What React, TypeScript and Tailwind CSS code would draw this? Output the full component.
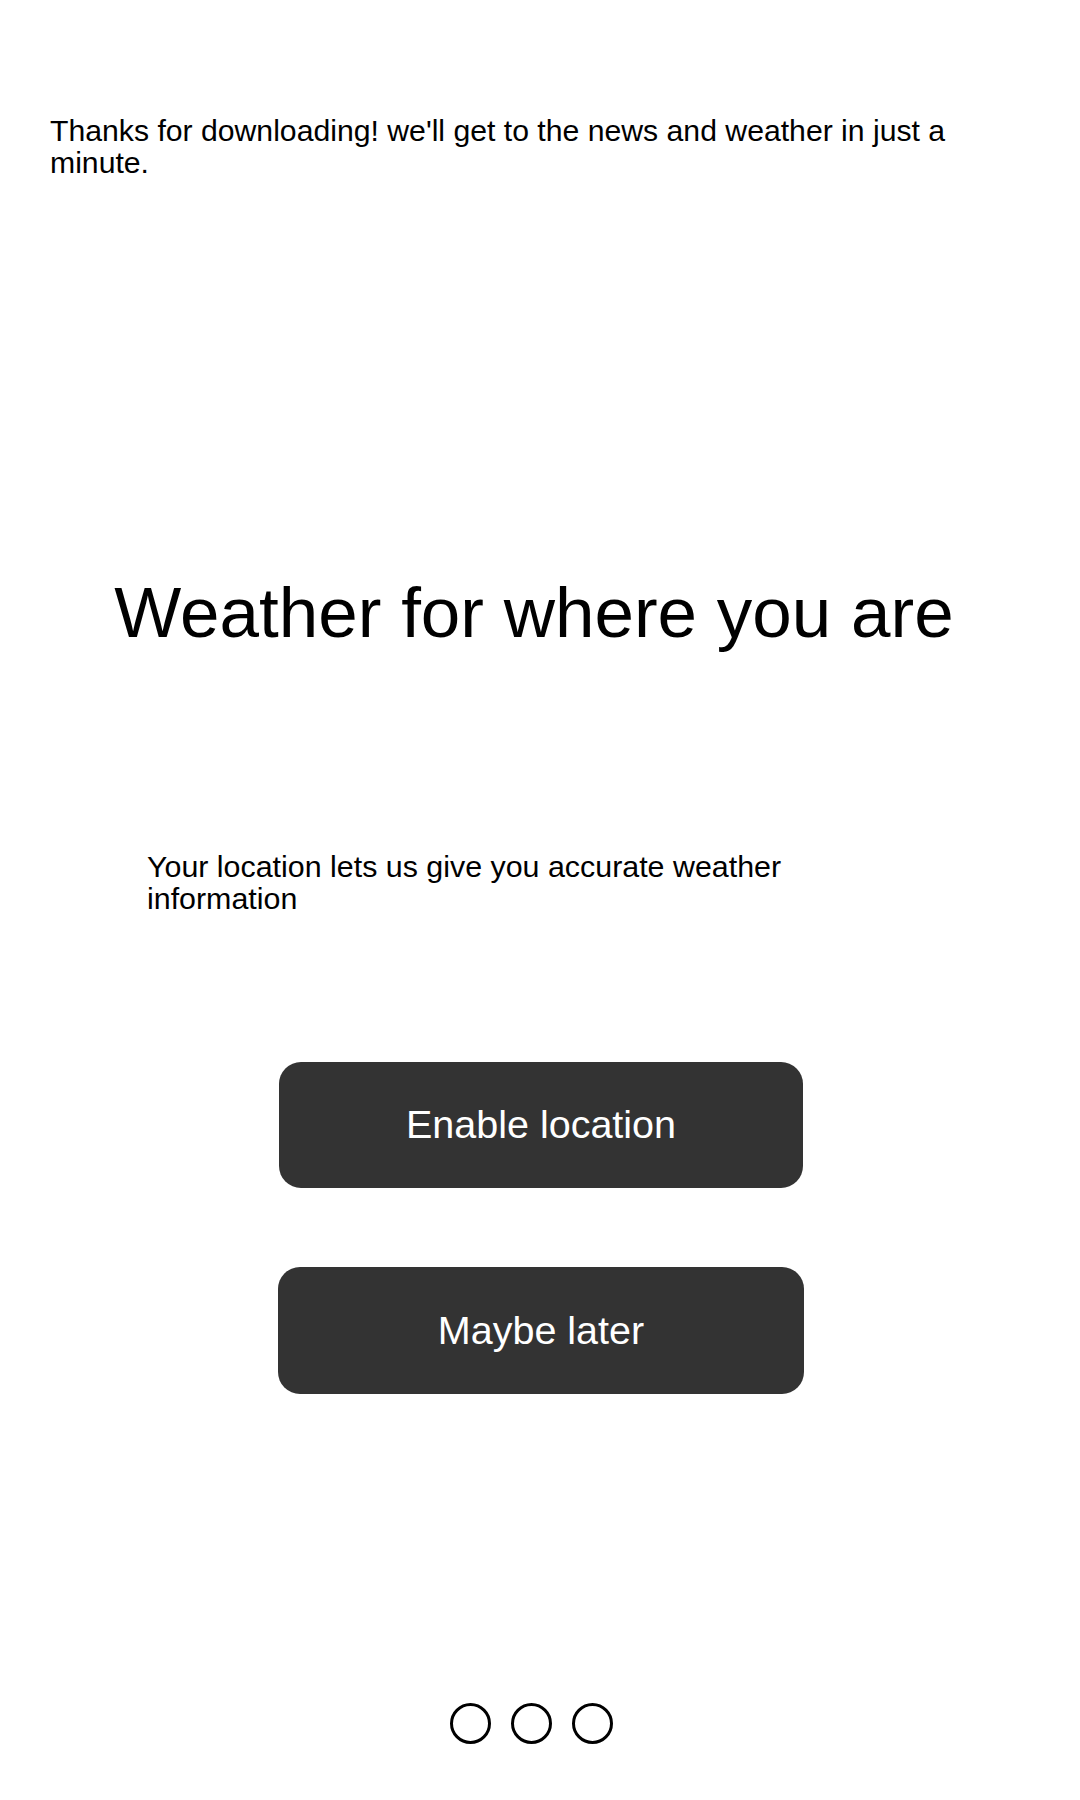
import React from 'react';

const STEPS = [0, 1, 2];

const App: React.FC = () => {
  return (
    <div className="min-h-[1800px] w-[1080px] bg-white text-black font-['Liberation_Sans',Arial,sans-serif]">
      {/* Intro */}
      <p className="px-[50px] pt-[115px] text-[30.2px] leading-[31.5px]">
        Thanks for downloading! we'll get to the news and weather in just a minute.
      </p>

      {/* Heading */}
      <h1 className="mt-[395px] pr-[12px] text-center text-[71px] leading-[80px] font-normal">
        Weather for where you are
      </h1>

      <p className="ml-[147px] mt-[198px] w-[700px] text-[30.4px] leading-[31.5px]">
        Your location lets us give you accurate weather information
      </p>

      {/* Actions */}
      <div className="mt-[148px] flex flex-col items-center gap-[79px] pl-[2px]">
        <button className="flex h-[126px] w-[524px] items-center justify-center rounded-[22px] bg-[#333333] text-[39.5px] text-white">
          Enable location
        </button>
        <button className="flex h-[127px] w-[526px] items-center justify-center rounded-[22px] bg-[#333333] text-[39.5px] text-white">
          Maybe later
        </button>
      </div>

      {/* Pager */}
      <div className="mt-[309px] flex justify-center gap-[20px] pr-[17px]">
        {STEPS.map(s => (
          <span key={s} className="block h-[41px] w-[41px] rounded-full border-[3px] border-black" />
        ))}
      </div>
    </div>
  );
};

export default App;
